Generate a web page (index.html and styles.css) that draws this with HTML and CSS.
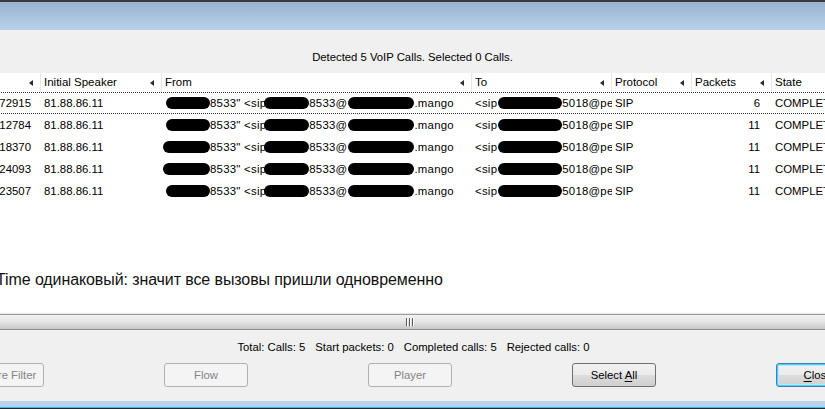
FILE: index.html
```html
<!DOCTYPE html>
<html>
<head>
<meta charset="utf-8">
<link rel="stylesheet" href="styles.css">
</head>
<body>
<div class="window">
  <div class="topline"></div>
  <div class="titlebar"></div>
  <div class="info">Detected 5 VoIP Calls. Selected 0 Calls.</div>
  <div class="list">
    <div class="grid header">
      <div class="hcell"><span></span><i class="arrow"></i></div>
      <div class="hcell"><span>Initial Speaker</span><i class="arrow"></i></div>
      <div class="hcell"><span>From</span><i class="arrow"></i></div>
      <div class="hcell"><span>To</span><i class="arrow"></i></div>
      <div class="hcell"><span>Protocol</span><i class="arrow"></i></div>
      <div class="hcell"><span>Packets</span><i class="arrow"></i></div>
      <div class="hcell"><span>State</span></div>
    </div>
    <div class="grid row focus">
      <div class="cell num">72915</div>
      <div class="cell">81.88.86.11</div>
      <div class="cell from"><b class="blob b1"></b>8533" &lt;sip<b class="blob b2"></b>8533@<b class="blob b3"></b>.mango</div>
      <div class="cell to">&lt;sip<b class="blob b4"></b>5018@pe</div>
      <div class="cell">SIP</div>
      <div class="cell pk">6</div>
      <div class="cell">COMPLETED</div>
    </div>
    <div class="grid row">
      <div class="cell num">12784</div>
      <div class="cell">81.88.86.11</div>
      <div class="cell from"><b class="blob b1"></b>8533" &lt;sip<b class="blob b2"></b>8533@<b class="blob b3"></b>.mango</div>
      <div class="cell to">&lt;sip<b class="blob b4"></b>5018@pe</div>
      <div class="cell">SIP</div>
      <div class="cell pk">11</div>
      <div class="cell">COMPLETED</div>
    </div>
    <div class="grid row">
      <div class="cell num">18370</div>
      <div class="cell">81.88.86.11</div>
      <div class="cell from shift"><b class="blob b1w"></b>8533" &lt;sip<b class="blob b2"></b>8533@<b class="blob b3"></b>.mango</div>
      <div class="cell to">&lt;sip<b class="blob b4"></b>5018@pe</div>
      <div class="cell">SIP</div>
      <div class="cell pk">11</div>
      <div class="cell">COMPLETED</div>
    </div>
    <div class="grid row">
      <div class="cell num">24093</div>
      <div class="cell">81.88.86.11</div>
      <div class="cell from shift"><b class="blob b1w"></b>8533" &lt;sip<b class="blob b2"></b>8533@<b class="blob b3"></b>.mango</div>
      <div class="cell to">&lt;sip<b class="blob b4"></b>5018@pe</div>
      <div class="cell">SIP</div>
      <div class="cell pk">11</div>
      <div class="cell">COMPLETED</div>
    </div>
    <div class="grid row">
      <div class="cell num">23507</div>
      <div class="cell">81.88.86.11</div>
      <div class="cell from"><b class="blob b1"></b>8533" &lt;sip<b class="blob b2"></b>8533@<b class="blob b3"></b>.mango</div>
      <div class="cell to">&lt;sip<b class="blob b4"></b>5018@pe</div>
      <div class="cell">SIP</div>
      <div class="cell pk">11</div>
      <div class="cell">COMPLETED</div>
    </div>
    <p class="note">Time одинаковый: значит все вызовы пришли одновременно</p>
  </div>
  <div class="splitter"><span class="grip"><i></i><i></i><i></i></span></div>
  <div class="bottom">
    <div class="status">
      <span>Total: Calls: 5</span>
      <span>Start packets: 0</span>
      <span>Completed calls: 5</span>
      <span>Rejected calls: 0</span>
    </div>
    <div class="buttons">
      <button class="btn disabled">Prepare Filter</button>
      <button class="btn disabled">Flow</button>
      <button class="btn disabled">Player</button>
      <button class="btn">Select <u>A</u>ll</button>
      <button class="btn default"><u>C</u>lose</button>
    </div>
  </div>
  <div class="frame-bottom"></div>
  <div class="cyanline"></div>
  <div class="darkline"></div>
</div>
</body>
</html>
```

FILE: styles.css
```css
* { box-sizing: border-box; }
html, body { margin: 0; padding: 0; }
body {
  width: 825px;
  height: 409px;
  overflow: hidden;
  background: #f0f0f0;
  font-family: "Liberation Sans", Arial, sans-serif;
  font-size: 11.3px;
  color: #000;
}
.window { width: 825px; overflow: hidden; }
.topline { height: 2px; background: #3b3b3b; }
.titlebar {
  height: 28px;
  background: linear-gradient(#99b3d0, #b9d1ea);
}
.info {
  height: 43px;
  padding-top: 20px;
  line-height: 14px;
  text-align: center;
  background: #f0f0f0;
}
.list {
  height: 240px;
  background: #fff;
  overflow: hidden;
}
.grid {
  display: grid;
  grid-template-columns: 81px 121px 310px 140px 80px 80px 130px;
  margin-left: -40px;
  width: 942px;
}
.header { height: 19px; background: #fff; }
.hcell {
  display: flex;
  align-items: center;
  justify-content: space-between;
  padding-left: 3px;
  border-right: 1px solid #e3e6ea;
  font-size: 11.5px;
  line-height: 19px;
  white-space: nowrap;
}
.arrow {
  display: block;
  width: 0;
  height: 0;
  border-top: 3.5px solid transparent;
  border-bottom: 3.5px solid transparent;
  border-right: 4px solid #2a2a2a;
  margin-right: 7px;
}
.row {
  height: 22px;
  border-top: 1px solid transparent;
  border-bottom: 1px solid transparent;
}
.row.focus {
  border-top: 1px dotted #303030;
  border-bottom: 1px dotted #303030;
}
.cell {
  padding-left: 3px;
  line-height: 20px;
  font-size: 11.4px;
  white-space: nowrap;
  overflow: hidden;
}
.num { text-align: right; padding-right: 10px; }
.pk { text-align: right; padding-right: 12px; }
.from { padding-left: 4px; letter-spacing: 0.25px; }
.from.shift { padding-left: 1px; }
.to { letter-spacing: 0.25px; }
.blob {
  display: inline-block;
  height: 12px;
  background: #000;
  border-radius: 6px;
  vertical-align: -2px;
}
.b1 { width: 44px; }
.b1w { width: 47px; }
.b2 { width: 45px; margin-left: -2px; }
.b3 { width: 66px; margin-left: 1px; }
.b4 { width: 64px; margin-left: 1px; }
.note {
  margin: 69px 0 0 -4px;
  font-size: 16px;
  line-height: 18px;
  letter-spacing: -0.1px;
  color: #111;
}
.splitter {
  height: 17px;
  border-top: 1px solid #e6e6e6;
  display: flex;
  justify-content: center;
  align-items: center;
  background:
    linear-gradient(#9a9a9a, #9a9a9a) top / 100% 1px no-repeat,
    linear-gradient(#8f8f8f, #8f8f8f) bottom / 100% 1px no-repeat,
    linear-gradient(#f3f3f3, #e6e6e6 45%, #c9c9c9 90%, #c0c0c0);
}
.grip { display: flex; gap: 1px; margin-left: -6px; }
.grip i {
  display: block;
  width: 2px;
  height: 8px;
  background: linear-gradient(90deg, #5a5a5a 50%, #fff 50%);
}
.bottom {
  height: 71px;
  background: #f0f0f0;
  padding-top: 10px;
}
.status {
  display: flex;
  justify-content: center;
  gap: 10px;
  line-height: 14px;
  padding-left: 2px;
}
.buttons {
  display: flex;
  gap: 120px;
  margin-top: 9px;
  margin-left: -40px;
  width: 1000px;
}
.btn {
  flex: 0 0 84px;
  height: 24px;
  border: 1px solid #707070;
  border-radius: 3px;
  background: linear-gradient(#f2f2f2, #ebebeb 49%, #dddddd 51%, #cfcfcf);
  font-family: "Liberation Sans", Arial, sans-serif;
  font-size: 11.3px;
  color: #000;
  padding: 0;
  white-space: nowrap;
}
.btn.disabled {
  border-color: #adb2b5;
  background: #f4f4f4;
  color: #838383;
}
.btn.default {
  border-color: #3c7fb1;
  box-shadow: inset 0 0 0 1px #48d3fb, inset 0 0 0 2px #b8e8f8;
}
.btn u { text-decoration: underline; text-underline-offset: 2px; }
.frame-bottom { height: 6px; background: #bad2ea; }
.cyanline { height: 1px; background: #3ab6e6; }
.darkline { height: 2px; background: #1d2a33; }
```
